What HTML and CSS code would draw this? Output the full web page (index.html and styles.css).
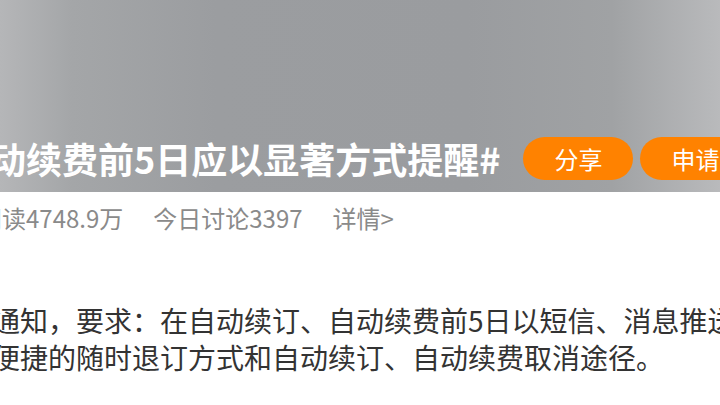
FILE: index.html
```html
<!DOCTYPE html>
<html lang="zh-CN">
<head>
<meta charset="utf-8">
<title>话题</title>
<link rel="stylesheet" href="styles.css">
</head>
<body>
<div class="page">
  <header class="banner">
    <div class="title-row">
      <h1 class="title">自动续费前5日应以显著方式提醒#</h1>
      <div class="actions">
        <button class="btn">分享</button>
        <button class="btn">申请主持人</button>
      </div>
    </div>
  </header>
  <div class="stats">
    <span class="stat">阅读4748.9万</span>
    <span class="stat">今日讨论3397</span>
    <span class="stat">详情&gt;</span>
  </div>
  <p class="lead">通知，要求：在自动续订、自动续费前5日以短信、消息推送等显著方式提醒用户<br>便捷的随时退订方式和自动续订、自动续费取消途径。</p>
</div>
</body>
</html>
```
FILE: styles.css
```css
html, body {
  margin: 0;
  padding: 0;
  background: #ffffff;
}
body {
  width: 720px;
  height: 405px;
  overflow: hidden;
  font-family: "Noto Sans CJK SC", "Noto Sans", sans-serif;
}
.page {
  width: 720px;
  overflow: hidden;
}
.banner {
  height: 192px;
  display: flex;
  flex-direction: column;
  justify-content: flex-end;
  padding-bottom: 12px;
  box-sizing: border-box;
  background: linear-gradient(to right, #b5b6b8 0%, #a4a6a8 10%, #9b9da0 30%, #9a9c9f 65%, #a0a2a4 85%, #b9babc 100%);
}
.title-row {
  display: flex;
  align-items: center;
  height: 43px;
  margin-left: -46px;
  white-space: nowrap;
}
.title {
  margin: 0;
  font-size: 36px;
  font-weight: 700;
  color: #ffffff;
  line-height: 43px;
}
.actions {
  display: flex;
  gap: 7px;
  margin-left: 23px;
}
.btn {
  height: 43px;
  padding: 0 31px;
  border: none;
  border-radius: 22px;
  background: #ff8200;
  color: #ffffff;
  font-family: "Noto Sans CJK SC", sans-serif;
  font-size: 24px;
  line-height: 43px;
  white-space: nowrap;
}
.stats {
  display: flex;
  gap: 30px;
  margin-top: 8px;
  margin-left: -22px;
  height: 36px;
  line-height: 36px;
  font-size: 24px;
  color: #8a8a8a;
  white-space: nowrap;
}
.lead {
  margin: 66px 0 0 -8px;
  font-size: 28px;
  line-height: 37px;
  color: #333333;
  white-space: nowrap;
}
```
